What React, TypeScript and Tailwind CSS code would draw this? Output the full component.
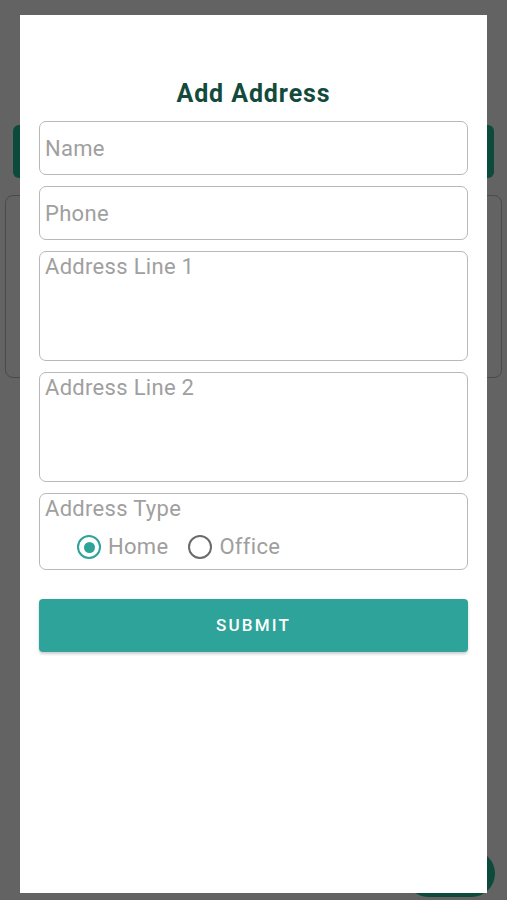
import { useState } from "react";

const font = { fontFamily: "Roboto, 'Noto Sans', sans-serif" };

function Radio({ checked, label, onClick }: { checked: boolean; label: string; onClick: () => void }) {
  return (
    <button type="button" onClick={onClick} className="flex items-center gap-[7px]">
      {checked ? (
        <span className="flex h-[24px] w-[24px] items-center justify-center rounded-full border-[2.5px] border-[#2da39a]">
          <span className="h-[11px] w-[11px] rounded-full bg-[#2da39a]" />
        </span>
      ) : (
        <span className="h-[24px] w-[24px] rounded-full border-[2.5px] border-[#6b6b6b]" />
      )}
      <span className="text-[22px] leading-none tracking-[0.3px] text-[#9e9e9e]">{label}</span>
    </button>
  );
}

export default function App() {
  const [type, setType] = useState("home");

  return (
    <div className="relative h-[900px] w-[507px] overflow-hidden bg-[#636363]" style={font}>
      {/* page behind the dialog (dimmed) */}
      <div className="px-[13px] pt-[125px]">
        <div className="h-[53px] rounded-[6px] bg-[#0c4a3b]" />
        <div className="mx-[-8px] mt-[17px] h-[183px] rounded-[8px] border border-[#4a4a4a]" />
      </div>
      <div className="absolute left-[405px] top-[850px] h-[47px] w-[90px] rounded-full bg-[#0c4a3b]" />

      {/* dialog */}
      <div className="absolute left-[20px] top-[15px] h-[878px] w-[467px] bg-white px-[19px] pt-[65px]">
        <h2 className="text-center text-[25px] font-bold leading-[28px] tracking-[0.9px] text-[#134a3c]">Add Address</h2>

        <div className="mt-[13px] flex flex-col gap-[11px]">
          <div className="flex h-[54px] items-center rounded-[7px] border-[1.5px] border-[#b8b8b8] px-[5px]">
            <input
              placeholder="Name"
              className="w-full bg-transparent text-[22px] tracking-[0.3px] text-[#333] outline-none placeholder:text-[#a0a0a0]"
            />
          </div>
          <div className="flex h-[54px] items-center rounded-[7px] border-[1.5px] border-[#b8b8b8] px-[5px]">
            <input
              placeholder="Phone"
              className="w-full bg-transparent text-[22px] tracking-[0.3px] text-[#333] outline-none placeholder:text-[#a0a0a0]"
            />
          </div>
          <textarea
            placeholder="Address Line 1"
            className="h-[110px] resize-none rounded-[7px] border-[1.5px] border-[#b8b8b8] px-[5px] pt-[2px] text-[22px] leading-[26px] tracking-[0.3px] text-[#333] outline-none placeholder:text-[#a0a0a0]"
          />
          <textarea
            placeholder="Address Line 2"
            className="h-[110px] resize-none rounded-[7px] border-[1.5px] border-[#b8b8b8] px-[5px] pt-[2px] text-[22px] leading-[26px] tracking-[0.3px] text-[#333] outline-none placeholder:text-[#a0a0a0]"
          />
          <div className="h-[77px] rounded-[7px] border-[1.5px] border-[#b8b8b8] px-[5px] pt-[2px]">
            <div className="text-[22px] leading-[26px] tracking-[0.3px] text-[#a0a0a0]">Address Type</div>
            <div className="mt-[13px] flex gap-[20px] pl-[32px]">
              <Radio checked={type === "home"} label="Home" onClick={() => setType("home")} />
              <Radio checked={type === "office"} label="Office" onClick={() => setType("office")} />
            </div>
          </div>
        </div>

        <button
          type="button"
          className="mt-[29px] h-[53px] w-full rounded-[4px] bg-[#2da39a] text-[17px] font-medium tracking-[2.2px] text-white shadow-[0_2px_3px_rgba(0,0,0,0.2)]"
        >
          SUBMIT
        </button>
      </div>
    </div>
  );
}
